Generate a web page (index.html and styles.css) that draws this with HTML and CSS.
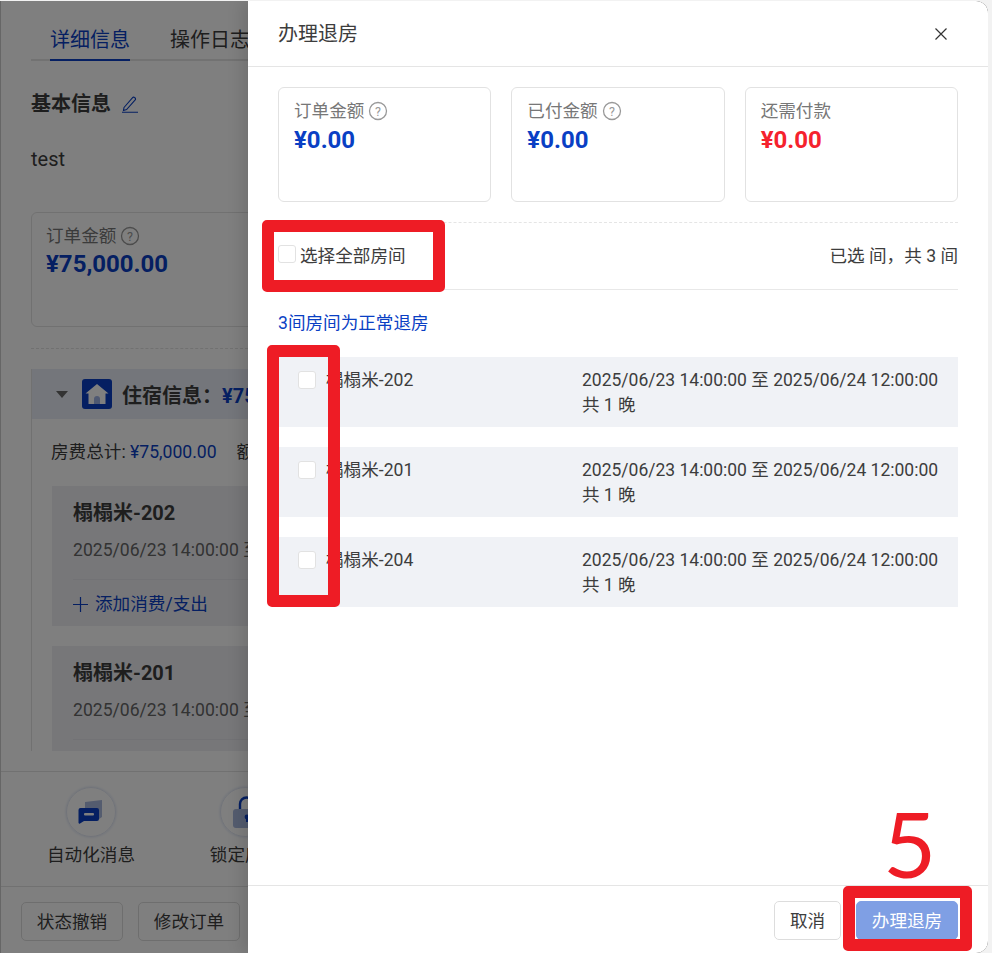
FILE: index.html
```html
<!DOCTYPE html>
<html lang="zh-CN">
<head>
<meta charset="utf-8">
<title>办理退房</title>
<link rel="stylesheet" href="styles.css">
</head>
<body>
<div class="app">
  <main class="order">
    <div class="order-scroll">
      <nav class="tabs">
        <span class="tab tab-active">详细信息</span>
        <span class="tab">操作日志</span>
      </nav>
      <h2 class="basic-title">基本信息
        <svg class="pencil" width="18" height="18" viewBox="0 0 18 18" fill="none" stroke="currentColor" stroke-width="1.1"><path d="M3 12.500 11.600 2.600a1.300 1.300 0 0 1 1.900-.1l.6.5a1.300 1.300 0 0 1 .1 1.900L5.600 14.600l-3.100.9z"/><path d="M1 17.200h16"/></svg>
      </h2>
      <p class="test">test</p>
      <div class="order-card">
        <div class="stat-label">订单金额 <svg class="help" width="20" height="20" viewBox="0 0 20 20"><circle cx="10" cy="10" r="8.500" fill="none" stroke="currentColor" stroke-width="1.300"/><text x="10" y="14.500" text-anchor="middle" font-size="12.500" font-family="Roboto" fill="currentColor">?</text></svg></div>
        <div class="stat-value">¥75,000.00</div>
      </div>
      <div class="dash"></div>
      <section class="stay">
        <header class="stay-head">
          <span class="tri"></span>
          <svg class="house" width="30" height="30" viewBox="0 0 30 30"><rect width="30" height="30" rx="3" fill="#0a3fc4"/><path d="M15 5 26.500 14.500 23.500 14.500V25H6.500V14.500H3.500z" fill="#fff"/><path d="M12 25v-5a3 3 0 0 1 6 0v5z" fill="#9fb2e4"/></svg>
          <span class="stay-title">住宿信息：<em>¥75,000.00</em></span>
        </header>
        <div class="stay-body">
          <div class="fee">房费总计: <em>¥75,000.00</em><span class="fee-next">额外消费</span></div>
          <article class="room-card">
            <h3>榻榻米-202</h3>
            <p class="room-date">2025/06/23 14:00:00 至</p>
            <div class="room-add">
              <svg width="15" height="15" viewBox="0 0 15 15" stroke="currentColor" stroke-width="1.200"><path d="M7.500 0v15M0 7.500h15"/></svg>
              添加消费/支出
            </div>
          </article>
          <article class="room-card room-card-cut">
            <h3>榻榻米-201</h3>
            <p class="room-date">2025/06/23 14:00:00 至</p>
          </article>
        </div>
      </section>
    </div>
    <div class="actions">
      <div class="action">
        <span class="circle">
          <svg width="28" height="26" viewBox="0 0 28 26"><path d="M8 3 25 1v17l-3 2H8z" fill="#a9b8de"/><path d="M3.500 9H20a2 2 0 0 1 2 2v9a2 2 0 0 1-2 2H7l-4 2.500a1 1 0 0 1-1.500-1V11a2 2 0 0 1 2-2z" fill="#0a3fc4"/><rect x="7" y="14" width="10" height="2.600" rx="1" fill="#fff"/></svg>
        </span>
        <span>自动化消息</span>
      </div>
      <div class="action">
        <span class="circle">
          <svg width="26" height="32" viewBox="0 0 26 32"><path d="M8 14V8a6.500 6.500 0 0 1 13 0v6" fill="none" stroke="#0a3fc4" stroke-width="2.400"/><rect x="1" y="13" width="24" height="19" rx="3" fill="#a9b8de"/><circle cx="15" cy="21" r="2.400" fill="#0a3fc4"/><rect x="14" y="21" width="2" height="5" fill="#0a3fc4"/></svg>
        </span>
        <span>锁定房间</span>
      </div>
    </div>
    <div class="bottom-btns">
      <button class="btn btn-wide">状态撤销</button>
      <button class="btn btn-wide">修改订单</button>
    </div>
  </main>

  <div class="mask"></div>

  <aside class="drawer">
    <header class="drawer-head">
      <span class="drawer-title">办理退房</span>
      <svg width="14" height="14" viewBox="0 0 14 14" stroke="#333" stroke-width="1.200"><path d="M1.500 1.500l11 11M12.500 1.500l-11 11"/></svg>
    </header>
    <div class="drawer-body">
      <div class="stats">
        <div class="stat">
          <div class="stat-label">订单金额 <svg class="help" width="20" height="20" viewBox="0 0 20 20"><circle cx="10" cy="10" r="8.500" fill="none" stroke="currentColor" stroke-width="1.300"/><text x="10" y="14.500" text-anchor="middle" font-size="12.500" font-family="Roboto" fill="currentColor">?</text></svg></div>
          <div class="stat-value">¥0.00</div>
        </div>
        <div class="stat">
          <div class="stat-label">已付金额 <svg class="help" width="20" height="20" viewBox="0 0 20 20"><circle cx="10" cy="10" r="8.500" fill="none" stroke="currentColor" stroke-width="1.300"/><text x="10" y="14.500" text-anchor="middle" font-size="12.500" font-family="Roboto" fill="currentColor">?</text></svg></div>
          <div class="stat-value">¥0.00</div>
        </div>
        <div class="stat">
          <div class="stat-label">还需付款</div>
          <div class="stat-value stat-red">¥0.00</div>
        </div>
      </div>
      <div class="select-all">
        <label class="check-label"><span class="check"></span>选择全部房间</label>
        <span>已选 间，共 3 间</span>
      </div>
      <div class="group-title">3间房间为正常退房</div>
      <div class="rooms">
        <div class="room">
          <span class="check"></span>
          <span class="room-name">榻榻米-202</span>
          <span class="room-time">2025/06/23 14:00:00 至 2025/06/24 12:00:00<br>共 1 晚</span>
        </div>
        <div class="room">
          <span class="check"></span>
          <span class="room-name">榻榻米-201</span>
          <span class="room-time">2025/06/23 14:00:00 至 2025/06/24 12:00:00<br>共 1 晚</span>
        </div>
        <div class="room">
          <span class="check"></span>
          <span class="room-name">榻榻米-204</span>
          <span class="room-time">2025/06/23 14:00:00 至 2025/06/24 12:00:00<br>共 1 晚</span>
        </div>
      </div>
    </div>
    <footer class="drawer-foot">
      <button class="btn btn-cancel">取消</button>
      <button class="btn btn-primary">办理退房</button>
    </footer>
  </aside>

  <div class="mark mark-all"></div>
  <div class="mark mark-rooms"></div>
  <div class="mark mark-submit"></div>
  <div class="step">5</div>
</div>
</body>
</html>
```

FILE: styles.css
```css
* { box-sizing: border-box; }
html, body { margin: 0; height: 100%; }
body {
  background: #f2f2f2;
  font-family: Roboto, "Noto Sans CJK SC", sans-serif;
  font-size: 17.6px;
  color: #3d3d3d;
  overflow: hidden;
}
em { font-style: normal; }
h2, h3, p { margin: 0; }

.app {
  position: relative;
  width: 988px;
  height: 952px;
  margin-top: 1px;
  background: #fff;
  border-left: 1px solid #666;
  border-radius: 0 12px 12px 0;
  overflow: hidden;
}

/* order page under the mask */
.order {
  width: 247px;
  height: 952px;
  display: flex;
  flex-direction: column;
  white-space: nowrap;
  overflow: hidden;
}
.order-scroll {
  height: 750px;
  padding-left: 30px;
  overflow: hidden;
}
.tabs {
  display: flex;
  gap: 40px;
  padding-left: 19px;
  height: 60px;
  padding-top: 25px;
  border-bottom: 2px solid #e5e5e5;
  font-size: 20px;
  line-height: 28px;
}
.tab { height: 35px; }
.tab-active { color: #0a3fc4; border-bottom: 2px solid #0a3fc4; }
.basic-title {
  margin-top: 28px;
  font-size: 20px;
  font-weight: 700;
  line-height: 30px;
  display: flex;
  align-items: center;
  gap: 10px;
}
.pencil { color: #0a3fc4; }
.test { margin-top: 25px; font-size: 20px; line-height: 30px; }
.order-card {
  margin-top: 38px;
  width: 300px;
  height: 115px;
  padding: 9px 14px;
  border: 1px solid #e2e2e2;
  border-radius: 6px;
}
.order-card .stat-value { margin-top: -1px; }
.dash { margin-top: 21px; border-top: 1px dashed #e2e2e2; }
.stay { margin-top: 20px; border-left: 1px solid #e2e2e2; width: 300px; }
.stay-head {
  height: 50px;
  background: #e9edf6;
  display: flex;
  align-items: center;
  padding-left: 24px;
}
.tri {
  width: 0;
  height: 0;
  border: 6px solid transparent;
  border-top: 7px solid #666;
  border-bottom: 0;
}
.house { margin-left: 14px; }
.stay-title { margin-left: 10px; font-size: 20px; font-weight: 700; }
.stay-title em { color: #0a3fc4; }
.stay-body { padding: 20px 0 0 20px; }
.fee { line-height: 26px; margin-left: -1px; }
.fee em { color: #0a3fc4; }
.fee-next { margin-left: 20px; }
.room-card {
  margin-top: 21px;
  width: 300px;
  height: 140px;
  padding: 11px 21px 0;
  background: #eeeff3;
}
.room-card h3 { font-size: 20px; font-weight: 700; line-height: 32px; }
.room-date { margin-top: 6px; line-height: 30px; color: #666; padding-bottom: 14px; border-bottom: 1px solid #e4e5ea; }
.room-add { margin-top: 10px; line-height: 28px; color: #0a3fc4; display: flex; align-items: center; gap: 7px; }
.room-card-cut { margin-top: 20px; height: 120px; }
.actions {
  height: 115px;
  margin-top: 20px;
  border-top: 1px solid #e2e2e2;
  display: flex;
  gap: 66px;
  padding: 15px 0 0 46px;
  flex: none;
}
.action { display: flex; flex-direction: column; align-items: center; gap: 4px; flex: none; width: 88px; }
.circle {
  width: 50px;
  height: 50px;
  border-radius: 50%;
  border: 1px solid #e3e8f4;
  box-shadow: 0 0 3px #d5ddf0;
  display: flex;
  align-items: center;
  justify-content: center;
}
.bottom-btns {
  border-top: 1px solid #e2e2e2;
  display: flex;
  gap: 15px;
  padding: 15px 0 0 20px;
  flex: none;
}
.btn {
  height: 39px;
  padding: 0 0 3px;
  background: #fff;
  border: 1px solid #ddd;
  border-radius: 5px;
  font: inherit;
  color: #3d3d3d;
  flex: none;
}
.btn-wide { width: 102px; }
.btn-cancel { width: 67px; }

.mask {
  position: absolute;
  inset: 0;
  background: rgba(0, 0, 0, .5);
}

/* drawer */
.drawer {
  position: absolute;
  top: 0;
  right: 0;
  bottom: 0;
  width: 740px;
  background: #fff;
  border-radius: 0 12px 12px 0;
  box-shadow: -6px 0 16px rgba(0, 0, 0, .12);
  display: flex;
  flex-direction: column;
}
.drawer-head {
  height: 66px;
  flex: none;
  padding: 0 40px 0 30px;
  border-bottom: 1px solid #e5e5e5;
  display: flex;
  align-items: center;
  justify-content: space-between;
  font-size: 20px;
}
.drawer-title { margin-top: -2px; }
.drawer-body { flex: 1; padding: 20px 30px 0; }
.stats { display: flex; gap: 20px; }
.stat {
  flex: 1;
  height: 115px;
  padding: 9px 15px;
  border: 1px solid #e2e2e2;
  border-radius: 6px;
}
.stat-label {
  color: #777;
  line-height: 28px;
  display: flex;
  align-items: center;
  gap: 4px;
}
.help { color: #999; }
.stat-value { color: #0a3fc4; font-size: 24px; font-weight: 700; line-height: 30px; }
.stat-red { color: #f5222d; }
.select-all {
  margin-top: 20px;
  height: 68px;
  padding-bottom: 4px;
  border-top: 1px dashed #e5e5e5;
  border-bottom: 1px solid #e8e8e8;
  display: flex;
  align-items: center;
  justify-content: space-between;
}
.check-label { display: flex; align-items: center; gap: 4px; }
.check {
  width: 18px;
  height: 18px;
  flex: none;
  background: #fff;
  border: 1px solid #e2e2e2;
  border-radius: 3px;
}
.group-title { margin-top: 20px; height: 27px; line-height: 27px; color: #0a3fc4; }
.rooms { margin-top: 20px; display: flex; flex-direction: column; gap: 20px; }
.room {
  height: 70px;
  padding: 11px 20px 9px;
  background: #f0f2f6;
  display: flex;
  align-items: flex-start;
  line-height: 25px;
}
.room .check { margin-top: 3px; }
.room-name { margin-left: 10px; width: 256px; flex: none; }
.room-time { flex: 1; white-space: nowrap; font-size: 17.5px; }
.drawer-foot {
  height: 68px;
  flex: none;
  border-top: 1px solid #e5e5e5;
  display: flex;
  justify-content: flex-end;
  gap: 15px;
  padding: 15px 30px 0;
}
.btn-primary { width: 102px; background: #7f9fe4; border-color: #7f9fe4; color: #fff; }

/* red annotations drawn over the screenshot */
.mark {
  position: absolute;
  border: 12px solid #ee1c25;
  border-radius: 5px;
}
.mark-all { left: 261px; top: 219px; width: 183px; height: 72px; }
.mark-rooms { left: 266px; top: 344px; width: 73px; height: 262px; }
.mark-submit { left: 842px; top: 885px; width: 129px; height: 65px; }
.step {
  position: absolute;
  left: 882px;
  top: 792px;
  font-family: Lato, sans-serif;
  font-weight: 400;
  font-size: 92px;
  line-height: 100px;
  color: #ee1c25;
}
```
